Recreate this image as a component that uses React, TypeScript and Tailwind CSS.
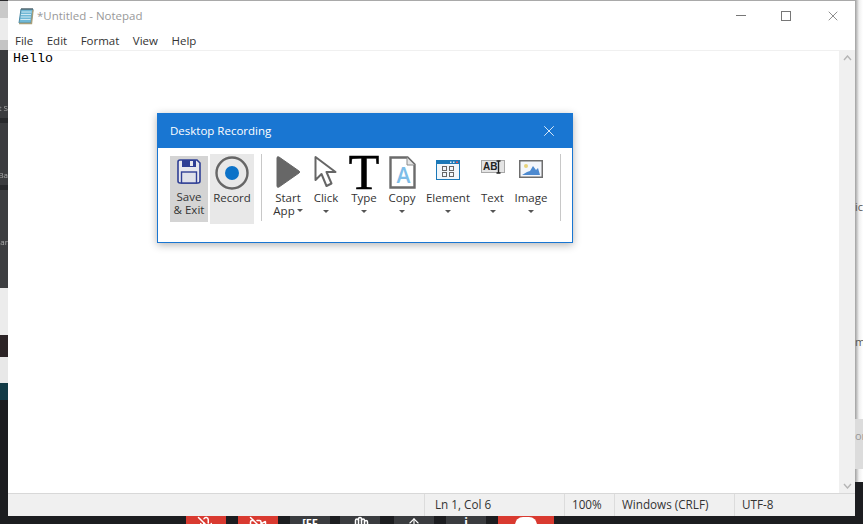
import { FC, ReactNode } from "react";
import { ArrowUp, Hand, MicOff, VideoOff, X } from "lucide-react";

const segoe = { fontFamily: '"Open Sans", "Noto Sans", sans-serif' };

const leftStrip: { h: string; bg: string; text?: string; pb?: string }[] = [
  { h: "h-[1px]", bg: "bg-[#2a2a2c]" },
  { h: "h-[17px]", bg: "bg-[#c9c9c9]" },
  { h: "h-[22px]", bg: "bg-[#ececec]" },
  { h: "h-[10px]", bg: "bg-[#c4c4c4]" },
  { h: "h-[68px]", bg: "bg-[#3b3c3f]", text: "ft S", pb: "pb-[5px]" },
  { h: "h-[5px]", bg: "bg-[#28292c]" },
  { h: "h-[62px]", bg: "bg-[#3b3c3f]", text: "Ba", pb: "pb-[5px]" },
  { h: "h-[5px]", bg: "bg-[#28292c]" },
  { h: "h-[98px]", bg: "bg-[#3d3e41]", text: "Mar", pb: "pb-[41px]" },
  { h: "h-[47px]", bg: "bg-[#ececec]" },
  { h: "h-[22px]", bg: "bg-[#2c2426]" },
  { h: "h-[26px]", bg: "bg-[#e8e8e8]" },
  { h: "h-[17px]", bg: "bg-[#123a46]" },
];

const Caret: FC<{ className?: string }> = ({ className }) => (
  <span
    className={`inline-block w-0 h-0 border-l-[3.5px] border-r-[3.5px] border-t-[3.5px] border-l-transparent border-r-transparent border-t-[#555] ${className ?? ""}`}
  />
);

const NotepadIcon = () => (
  <svg width="17" height="18" viewBox="0 0 17 18">
    <path d="M4 2h12l-2 14H2z" fill="#6fb8d6" stroke="#4c8aa5" />
    <path d="M4.5 5h10M4 7.5h10M3.7 10h10M3.4 12.5h10" stroke="#cfe8f2" />
    <path d="M2 16.5h12.5L16 3" fill="none" stroke="#a89f7a" strokeWidth="1.4" />
    <path d="M5 1v2M7 1v2M9 1v2M11 1v2M13 1v2M15 1v2" stroke="#555" />
  </svg>
);

const SaveIcon = () => (
  <svg width="24" height="25" viewBox="0 0 24 25">
    <path d="M1 3q0-2 2-2h17l3 3v18q0 2-2 2H3q-2 0-2-2z" fill="#e8e8ee" stroke="#2f3f95" strokeWidth="1.6" />
    <rect x="5" y="1" width="14" height="7" fill="#2f3f95" />
    <rect x="13" y="2" width="3" height="5" fill="#e8e8ee" />
    <rect x="4.5" y="13" width="15" height="11" fill="#dfe1ea" stroke="#2f3f95" strokeWidth="1.4" />
  </svg>
);

const RecordIcon = () => (
  <svg width="34" height="34" viewBox="0 0 34 34">
    <circle cx="17" cy="17" r="15.5" fill="none" stroke="#666" strokeWidth="2.4" />
    <circle cx="17" cy="17" r="7" fill="#0b72c8" />
  </svg>
);

const PlayIcon = () => (
  <svg width="26" height="34" viewBox="0 0 26 34">
    <path d="M2 3q0-2 2-1l20 14q1.500 1 0 2L4 32q-2 1-2-1z" fill="#676767" stroke="#676767" />
  </svg>
);

const CursorIcon = () => (
  <svg width="26" height="34" viewBox="0 0 26 34">
    <path
      d="M2.500 2v23l6-6 5 12 5-2.500-5-11.500h9z"
      fill="#fff"
      stroke="#666"
      strokeWidth="2"
      strokeLinejoin="round"
    />
  </svg>
);

const CopyIcon = () => (
  <svg width="27" height="33" viewBox="0 0 27 33">
    <path d="M1.500 1.500h17l7 7v23h-24z" fill="#fff" stroke="#6b6b6b" strokeWidth="2.400" />
    <path d="M18 1.500v7.500h7.500" fill="#e6e6e6" stroke="#8a8a8a" />
    <text
      x="14.500"
      y="27"
      textAnchor="middle"
      fontSize="21"
      fontWeight="600"
      fill="#7dbde8"
      fontFamily="Open Sans, sans-serif"
    >
      A
    </text>
  </svg>
);

const ElementIcon = () => (
  <svg width="24" height="20" viewBox="0 0 24 20">
    <rect width="24" height="20" fill="#1b78b8" />
    <rect x="1" y="4" width="22" height="15" fill="#f1f6fa" />
    <rect x="14" y="1.500" width="1.500" height="1.500" fill="#d7e8f4" />
    <rect x="17" y="1.500" width="1.500" height="1.500" fill="#d7e8f4" />
    <rect x="20" y="1.500" width="2" height="1.500" fill="#e85a5a" />
    <g fill="none" stroke="#666" strokeWidth="1">
      <rect x="6.500" y="6.500" width="4" height="4" />
      <rect x="13.500" y="6.500" width="4" height="4" />
      <rect x="6.500" y="12.500" width="4" height="4" />
      <rect x="13.500" y="12.500" width="4" height="4" />
    </g>
  </svg>
);

const TextIcon = () => (
  <svg width="24" height="14" viewBox="0 0 24 14">
    <rect x="0.500" y="0.500" width="23" height="12" fill="#e4e4e4" stroke="#a8a8a8" />
    <text
      x="2"
      y="10"
      fontSize="10"
      fontWeight="700"
      fill="#222"
      fontFamily="Liberation Sans, sans-serif"
    >
      AB
    </text>
    <path d="M15.500 1h4M15.500 13h4M17.500 1v12" stroke="#222" strokeWidth="1.400" />
  </svg>
);

const ImageIcon = () => (
  <svg width="24" height="18" viewBox="0 0 24 18">
    <rect x="0.750" y="0.750" width="22.500" height="16.500" fill="#f3f6fb" stroke="#6e6e6e" strokeWidth="1.500" />
    <circle cx="7" cy="6" r="2" fill="#e8d27a" />
    <path d="M3 15l5-3 3-1 3-5 3 4 2-2 2 7z" fill="#4d8ad0" />
  </svg>
);

const ToolButton: FC<{ icon: ReactNode; label: string; width: string }> = ({ icon, label, width }) => (
  <div className={`flex flex-col items-center ${width}`}>
    <div className="h-[36px] flex items-center justify-center">{icon}</div>
    <span className="text-[11.5px] leading-[15px] text-[#333]">{label}</span>
    <Caret className="mt-[5px]" />
  </div>
);

const TopIcon: FC<{ children: ReactNode }> = ({ children }) => <div className="h-[36px] pt-[6px]">{children}</div>;

const Separator = () => <div className="w-[1px] h-[67px] bg-[#c8c8c8]" />;

const DesktopRecording = () => (
  <div className="absolute left-[157px] top-[113px] w-[416px] h-[130px] border border-[#1976d2] bg-white shadow-[0_2px_8px_rgba(0,0,0,0.3)]">
    <div className="h-[34px] bg-[#1976d2] flex items-center justify-between pl-[12px] pr-[14px]">
      <span className="text-[11.5px] leading-[16px] pb-[1px] text-white">Desktop Recording</span>
      <X size={18} strokeWidth={1.1} className="text-white" />
    </div>
    <div className="flex items-start pl-[12px] pt-[6px]">
      <div className="mt-[2px] w-[38px] h-[66px] bg-[#d4d4d4] flex flex-col items-center pt-[3px] text-[11.5px] leading-[13px] text-[#333]">
        <SaveIcon />
        <span className="mt-[6px]">Save</span>
        <span>&amp; Exit</span>
      </div>
      <div className="ml-[2px] w-[44px] h-[70px] bg-[#e8e8e8] flex flex-col items-center pt-[2px] text-[11.5px] leading-[15px] text-[#333]">
        <RecordIcon />
        <span>Record</span>
      </div>
      <div className="ml-[7px] mr-[7px]">
        <Separator />
      </div>
      <div className="w-[38px] flex flex-col items-center text-[11.5px] leading-[13px] text-[#333]">
        <div className="h-[36px] flex items-center">
          <PlayIcon />
        </div>
        <span className="mt-[1px]">Start</span>
        <span className="flex items-center gap-[2px]">
          App
          <Caret />
        </span>
      </div>
      <ToolButton icon={<CursorIcon />} label="Click" width="w-[38px]" />
      <ToolButton
        icon={
          <span
            className="text-[50px] leading-[36px] text-black"
            style={{ fontFamily: '"Liberation Serif", serif', WebkitTextStroke: "0.6px black" }}
          >
            T
          </span>
        }
        label="Type"
        width="w-[38px]"
      />
      <ToolButton icon={<CopyIcon />} label="Copy" width="w-[38px]" />
      <ToolButton
        icon={
          <TopIcon>
            <ElementIcon />
          </TopIcon>
        }
        label="Element"
        width="w-[54px]"
      />
      <ToolButton
        icon={
          <TopIcon>
            <TextIcon />
          </TopIcon>
        }
        label="Text"
        width="w-[35px]"
      />
      <ToolButton
        icon={
          <TopIcon>
            <ImageIcon />
          </TopIcon>
        }
        label="Image"
        width="w-[42px]"
      />
      <div className="ml-[8px]">
        <Separator />
      </div>
    </div>
  </div>
);

const Notepad = () => (
  <div className="w-[847px] h-full flex flex-col bg-white border-t border-[#a9a9a9]">
    <div className="h-[29px] flex items-center shrink-0">
      <div className="ml-[9px] mr-[3px] flex">
        <NotepadIcon />
      </div>
      <span className="text-[11.5px] text-[#999]">*Untitled - Notepad</span>
      <div className="ml-auto flex items-center">
        <div className="w-[10px] h-[1px] bg-[#777] mr-[35px]" />
        <div className="w-[10px] h-[10px] border border-[#777] mr-[34px]" />
        <X size={16} strokeWidth={1} className="text-[#555] mr-[14px]" />
      </div>
    </div>
    <div className="h-[20px] flex items-center text-[11.5px] text-[#333] shrink-0 pl-[7px] pt-[1px] gap-[13.5px]">
      <span>File</span>
      <span>Edit</span>
      <span>Format</span>
      <span>View</span>
      <span>Help</span>
    </div>
    <div className="flex-1 flex border-t border-[#f0f0f0] min-h-0">
      <div
        className="flex-1 pl-[5px] text-[13.33px] leading-[15px] text-black"
        style={{ fontFamily: '"Liberation Mono", monospace' }}
      >
        Hello
      </div>
      <div className="w-[16px] bg-[#f0f0f0] flex flex-col items-center justify-between py-[4px] text-[#b5b5b5]">
        <svg width="9" height="6" viewBox="0 0 9 6">
          <path d="M1 5l3.500-4 3.500 4" fill="none" stroke="currentColor" strokeWidth="1.400" />
        </svg>
        <svg width="9" height="6" viewBox="0 0 9 6">
          <path d="M1 1l3.500 4 3.500-4" fill="none" stroke="currentColor" strokeWidth="1.400" />
        </svg>
      </div>
    </div>
    <div className="h-[23px] shrink-0 border-t border-[#d8d8d8] bg-[#f0f0f0] flex text-[11.7px] text-[#333]">
      <div className="w-[416px]" />
      <div className="w-[140px] border-l border-[#dcdcdc] pl-[10px] flex items-center">Ln 1, Col 6</div>
      <div className="w-[50px] border-l border-[#dcdcdc] pl-[7px] flex items-center">100%</div>
      <div className="w-[120px] border-l border-[#dcdcdc] pl-[7px] flex items-center">Windows (CRLF)</div>
      <div className="flex-1 border-l border-[#dcdcdc] pl-[7px] flex items-center">UTF-8</div>
    </div>
  </div>
);

const TaskButton: FC<{ className: string; children?: ReactNode }> = ({ className, children }) => (
  <div className={`h-[8px] overflow-hidden flex justify-center text-white ${className}`}>{children}</div>
);

const App = () => (
  <div
    className="relative w-[863px] h-[524px] overflow-hidden bg-[#1c1d20] flex flex-col"
    style={segoe}
  >
    <div className="flex h-[516px] shrink-0">
      <div className="w-[8px] overflow-hidden">
        {leftStrip.map((seg, i) => (
          <div
            key={i}
            className={`${seg.h} ${seg.bg} flex items-end justify-end overflow-hidden whitespace-nowrap text-[8px] leading-[10px] text-[#aaa] blur-[0.4px]`}
          >
            {seg.text && <span className={seg.pb}>{seg.text}</span>}
          </div>
        ))}
      </div>
      <Notepad />
      <div className="w-[8px] h-[482px] bg-gradient-to-r from-[#a0a0a0] via-[#f0f0f0] to-white flex flex-col overflow-hidden text-[11px] text-[#555]">
        <span className="mt-[200px] leading-[14px]">ic</span>
        <span className="mt-[121px] leading-[14px]">m</span>
        <div className="mt-[70px] h-[50px] bg-[#dcdcdc] text-[#999] leading-[34px]">or</div>
      </div>
    </div>
    <div className="flex pl-[186px]">
      <TaskButton className="w-[40px] bg-[#d93a30]">
        <MicOff size={18} />
      </TaskButton>
      <TaskButton className="w-[40px] ml-[12px] bg-[#d93a30]">
        <VideoOff size={18} />
      </TaskButton>
      <TaskButton className="w-[40px] ml-[12px] bg-[#3a3c3f] pt-[1px] font-bold text-[11px] leading-[12px]">
        [FF
      </TaskButton>
      <TaskButton className="w-[40px] ml-[10px] bg-[#3a3c3f]">
        <Hand size={18} />
      </TaskButton>
      <TaskButton className="w-[40px] ml-[14px] bg-[#3a3c3f]">
        <ArrowUp size={14} />
      </TaskButton>
      <TaskButton className="w-[40px] ml-[12px] bg-[#3a3c3f] font-bold text-[12px] leading-[14px]">
        i
      </TaskButton>
      <TaskButton className="w-[56px] ml-[12px] bg-[#d93a30] pt-[1px]">
        <div className="w-[22px] h-[16px] rounded-full bg-white" />
      </TaskButton>
    </div>
    <DesktopRecording />
  </div>
);

export default App;
